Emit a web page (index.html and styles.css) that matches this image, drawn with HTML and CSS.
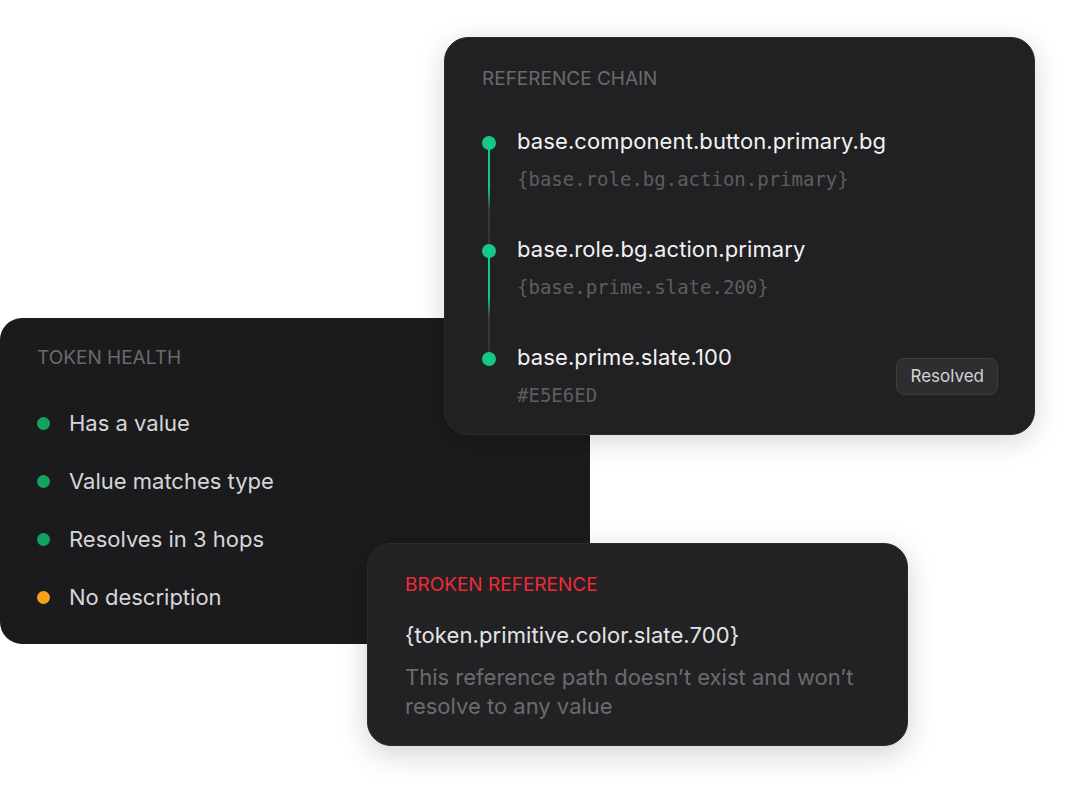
FILE: index.html
```html
<!DOCTYPE html>
<html>

<head>
  <title>Token inspector</title>
  <link rel="stylesheet" href="styles.css">
</head>

<body>
  <div class="canvas">

    <!-- health checks for the selected token -->
    <section class="card card-health">
      <h2 class="card-label">Token Health</h2>
      <ul class="checks">
        <li class="check"><span class="check-dot ok"></span>Has a value</li>
        <li class="check"><span class="check-dot ok"></span>Value matches type</li>
        <li class="check"><span class="check-dot ok"></span>Resolves in 3 hops</li>
        <li class="check"><span class="check-dot warn"></span>No description</li>
      </ul>
    </section>

    <!-- alias chain, from the component token down to the raw value -->
    <section class="card card-chain">
      <h2 class="card-label">Reference Chain</h2>
      <ol class="chain">
        <li class="hop">
          <span class="hop-dot"></span>
          <div class="hop-text">
            <div class="hop-name">base.component.button.primary.bg</div>
            <div class="hop-value">{base.role.bg.action.primary}</div>
          </div>
        </li>
        <li class="hop">
          <span class="hop-dot"></span>
          <div class="hop-text">
            <div class="hop-name">base.role.bg.action.primary</div>
            <div class="hop-value">{base.prime.slate.200}</div>
          </div>
        </li>
        <li class="hop hop-last">
          <span class="hop-dot"></span>
          <div class="hop-text">
            <div class="hop-name">base.prime.slate.100</div>
            <div class="hop-value">#E5E6ED</div>
          </div>
          <span class="badge">Resolved</span>
        </li>
      </ol>
    </section>

    <!-- error shown when an alias points nowhere -->
    <section class="card card-broken">
      <h2 class="card-label danger">Broken Reference</h2>
      <div class="broken-path">{token.primitive.color.slate.700}</div>
      <p class="broken-note">This reference path doesn’t exist and won’t resolve to any value</p>
    </section>

  </div>
</body>
</html>
```

FILE: styles.css
```css
body {
  margin: 0;
  background-color: #ffffff;
  font-family: Inter, "Noto Sans", sans-serif;
}

.canvas {
  position: relative;
  width: 1080px;
  height: 800px;
  overflow: hidden;
}

/* cards float freely and overlap each other */
.card {
  position: absolute;
  box-sizing: border-box;
  border-radius: 24px;
  padding-left: 37px;
  padding-right: 37px;
}

.card-label {
  margin: 0;
  font-size: 19px;
  line-height: 20px;
  font-weight: 400;
  text-transform: uppercase;
  color: #6a6a6d;
}

.card-label.danger {
  color: #ee2a35;
}

/* token health */
.card-health {
  left: 0;
  top: 318px;
  width: 590px;
  height: 326px;
  padding-top: 30px;
  background-color: #1b1b1d;
  border-radius: 22px;
}

.checks {
  list-style: none;
  margin: 41px 0 0 0;
  padding: 0;
  display: flex;
  flex-direction: column;
  gap: 30px;
}

.check {
  display: flex;
  align-items: center;
  gap: 19px;
  font-size: 22px;
  line-height: 28px;
  color: #d6d6d8;
}

.check-dot {
  width: 13px;
  height: 13px;
  border-radius: 50%;
}

.check-dot.ok {
  background-color: #12a35e;
}

.check-dot.warn {
  background-color: #f7a21b;
}

/* reference chain */
.card-chain {
  left: 444px;
  top: 37px;
  width: 591px;
  height: 398px;
  padding-top: 31px;
  background-color: #212123;
  border: 1px solid #2b2b2d;
  box-shadow: 0 6px 28px rgba(0, 0, 0, 0.16);
}

.chain {
  list-style: none;
  margin: 38px 0 0 0;
  padding: 0;
  display: flex;
  flex-direction: column;
  gap: 44px;
}

.hop {
  position: relative;
  display: flex;
  align-items: flex-start;
}

.hop-dot {
  flex: none;
  width: 14px;
  height: 14px;
  margin-top: 9px;
  margin-right: 21px;
  border-radius: 50%;
  background-color: #14c985;
  position: relative;
  z-index: 1;
}

/* connector running down to the next dot */
.hop::before {
  content: "";
  position: absolute;
  left: 6px;
  top: 16px;
  width: 2px;
  height: 108px;
  background: linear-gradient(#14c985 0, #14c985 42%, #3a3a3c 62%, #333335 100%);
}

.hop-last::before {
  display: none;
}

.hop-text {
  flex: 1;
}

.hop-name {
  font-size: 22px;
  line-height: 28px;
  letter-spacing: 0.1px;
  color: #f2f2f3;
}

.hop-value {
  margin-top: 12px;
  font-family: "DejaVu Sans Mono", "Liberation Mono", monospace;
  font-size: 19px;
  line-height: 24px;
  color: #5d5d60;
}

.badge {
  align-self: flex-start;
  margin-top: 15px;
  margin-right: -1px;
  padding: 7px 13px;
  font-size: 17px;
  line-height: 21px;
  color: #d4d4d6;
  background-color: #2e2e30;
  border: 1px solid #3c3c3e;
  border-radius: 8px;
}

/* broken reference */
.card-broken {
  left: 367px;
  top: 543px;
  width: 541px;
  height: 203px;
  padding-top: 31px;
  background-color: #222224;
  border: 1px solid #2c2c2e;
  box-shadow: 0 8px 30px rgba(0, 0, 0, 0.18);
}

.broken-path {
  margin-top: 26px;
  font-size: 22px;
  line-height: 28px;
  letter-spacing: 0.1px;
  color: #e4e4e6;
}

.broken-note {
  margin: 14px 0 0 0;
  font-size: 22px;
  line-height: 29px;
  color: #6b6b6e;
}
```
